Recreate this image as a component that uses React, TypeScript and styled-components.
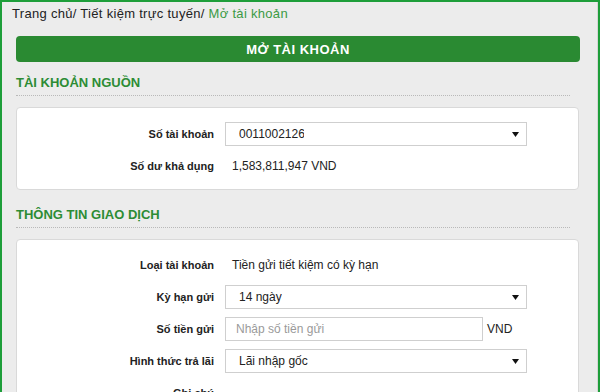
import * as React from "react";
import styled, { createGlobalStyle } from "styled-components";

const GlobalStyle = createGlobalStyle`
  html, body {
    margin: 0;
    padding: 0;
    background: #ececec;
  }
  body {
    font-family: "Liberation Sans", Arial, sans-serif;
    color: #222;
  }
`;

const Frame = styled.div`
  width: 600px;
  height: 392px;
  box-sizing: border-box;
  border-top: 2px solid #1e9e3a;
  border-left: 2px solid #1e9e3a;
  border-right: 2px solid #1e9e3a;
  overflow: hidden;
  background: #ececec;
`;

const Page = styled.div`
  height: 100%;
  box-sizing: border-box;
  border-right: 1px solid #d6d6d6;
  padding: 4px 17px 0 14px;
`;

const Breadcrumb = styled.div`
  font-size: 13px;
  line-height: 16px;
  letter-spacing: 0.3px;
  margin-left: -4px;
  color: #222;
  white-space: nowrap;
`;

const Crumb = styled.span<{ $active?: boolean }>`
  color: ${(p) => (p.$active ? "#3b9a44" : "#222")};
`;

const TitleBar = styled.div`
  margin-top: 14px;
  height: 26px;
  border-radius: 4px;
  background: #2a8a32;
  color: #fff;
  font-size: 13px;
  font-weight: bold;
  letter-spacing: 0.5px;
  display: flex;
  align-items: center;
  justify-content: center;
`;

const SectionTitle = styled.div<{ $top: number }>`
  margin-top: ${(p) => p.$top}px;
  margin-right: 10px;
  font-size: 13px;
  line-height: 14px;
  font-weight: bold;
  color: #2d8c35;
  padding-bottom: 5px;
  border-bottom: 1px dotted #b9b9b9;
`;

const Card = styled.div<{ $pt: number; $pb: number }>`
  margin-top: 11px;
  margin-right: 1px;
  background: #fff;
  border: 1px solid #d9d9d9;
  border-radius: 4px;
  padding: ${(p) => p.$pt}px 0 ${(p) => p.$pb}px;
  display: grid;
  grid-template-columns: 197px 1fr;
  column-gap: 11px;
  row-gap: 8px;
  align-items: center;
`;

const Label = styled.div`
  text-align: right;
  font-size: 11px;
  font-weight: bold;
  color: #222;
  line-height: 24px;
  white-space: nowrap;
`;

const Field = styled.div`
  display: flex;
  align-items: center;
  gap: 4px;
  height: 24px;
`;

const StaticValue = styled.div`
  padding-left: 7px;
  font-size: 12px;
  color: #222;
  line-height: 24px;
  white-space: nowrap;
`;

const SelectBox = styled.div<{ $width: number }>`
  width: ${(p) => p.$width}px;
  height: 24px;
  box-sizing: border-box;
  border: 1px solid #cfcfcf;
  background: #fff;
  display: flex;
  align-items: center;
  justify-content: space-between;
  padding: 0 7px 0 13px;
  font-size: 12px;
  color: #222;
`;

const SelectText = styled.span<{ $clip?: number }>`
  white-space: nowrap;
  overflow: hidden;
  max-width: ${(p) => (p.$clip ? `${p.$clip}px` : "none")};
`;

const InputBox = styled.input`
  width: 258px;
  height: 24px;
  box-sizing: border-box;
  border: 1px solid #cfcfcf;
  background: #fff;
  padding: 0 10px;
  font-family: "Liberation Sans", Arial, sans-serif;
  font-size: 12px;
  color: #222;
  outline: none;
  &::placeholder {
    color: #9a9a9a;
  }
`;

const Unit = styled.span`
  font-size: 12px;
  color: #222;
`;

const Arrow = () => (
  <svg width="7" height="5" viewBox="0 0 7 5">
    <path d="M0 0 L7 0 L3.5 5 Z" fill="#111" />
  </svg>
);

const Select = ({ value, width = 302, clip }: { value: string; width?: number; clip?: number }) => (
  <SelectBox $width={width}>
    <SelectText $clip={clip}>{value}</SelectText>
    <Arrow />
  </SelectBox>
);

export default function App() {
  return (
    <>
      <GlobalStyle />
      <Frame>
        <Page>
          <Breadcrumb>
            <Crumb>Trang chủ/ </Crumb>
            <Crumb>Tiết kiệm trực tuyến/ </Crumb>
            <Crumb $active>Mở tài khoản</Crumb>
          </Breadcrumb>

          <TitleBar>MỞ TÀI KHOẢN</TitleBar>

          <SectionTitle $top={14}>TÀI KHOẢN NGUỒN</SectionTitle>
          <Card $pt={14} $pb={11}>
            <Label>Số tài khoản</Label>
            <Field>
              <Select value="00110021260" clip={65} />
            </Field>
            <Label>Số dư khả dụng</Label>
            <StaticValue>1,583,811,947 VND</StaticValue>
          </Card>

          <SectionTitle $top={18}>THÔNG TIN GIAO DỊCH</SectionTitle>
          <Card $pt={13} $pb={14}>
            <Label>Loại tài khoản</Label>
            <StaticValue>Tiền gửi tiết kiệm có kỳ hạn</StaticValue>
            <Label>Kỳ hạn gửi</Label>
            <Field>
              <Select value="14 ngày" />
            </Field>
            <Label>Số tiền gửi</Label>
            <Field>
              <InputBox placeholder="Nhập số tiền gửi" />
              <Unit>VND</Unit>
            </Field>
            <Label>Hình thức trả lãi</Label>
            <Field>
              <Select value="Lãi nhập gốc" />
            </Field>
            <Label>Ghi chú</Label>
            <Field />
          </Card>
        </Page>
      </Frame>
    </>
  );
}
